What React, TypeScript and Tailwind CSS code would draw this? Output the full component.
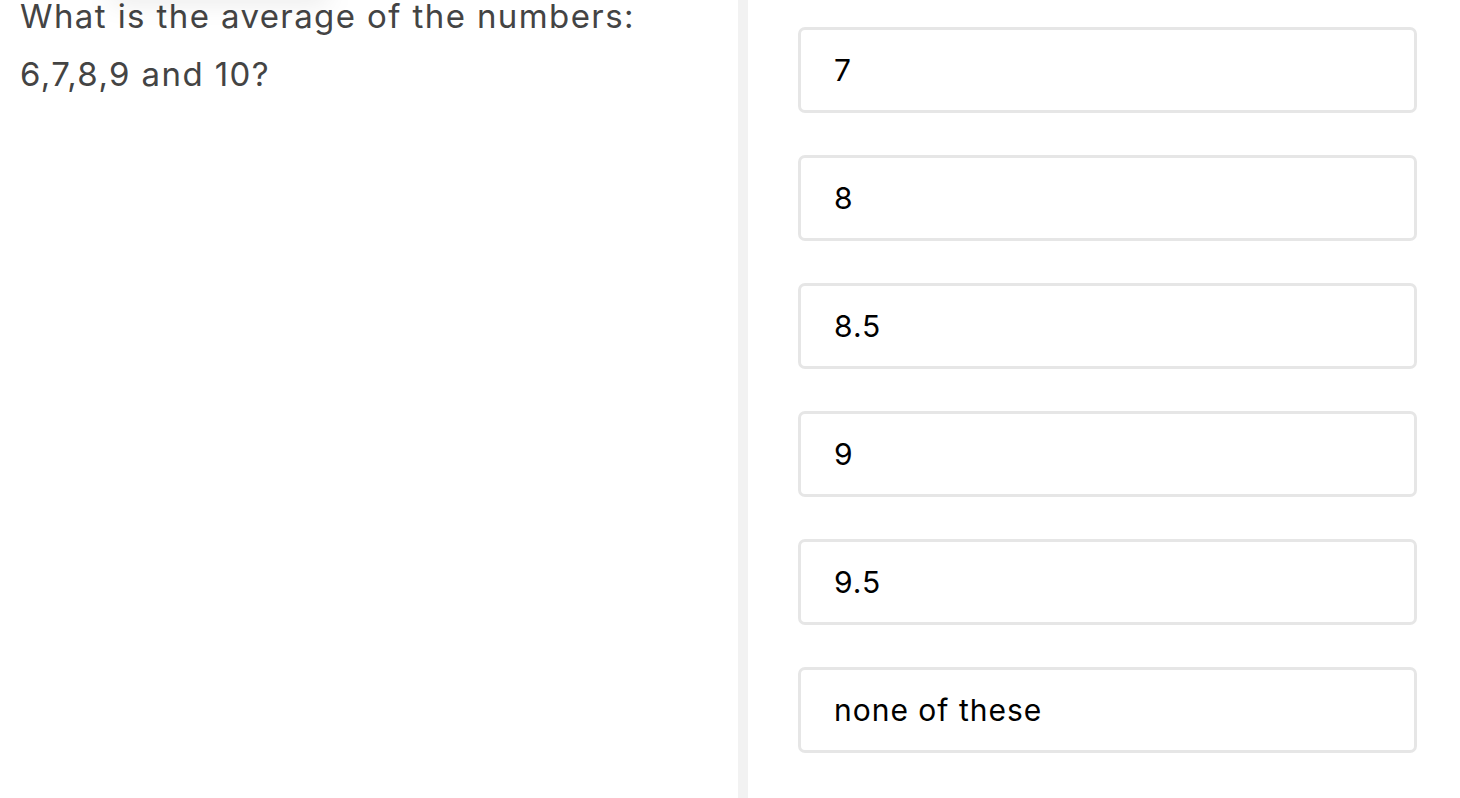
const answers = ['7', '8', '8.5', '9', '9.5', 'none of these'];

export default function App() {
  return (
    <div
      className="relative flex h-[798px] w-full overflow-hidden bg-white"
      style={{ fontFamily: 'Inter, "Noto Sans", sans-serif' }}
    >
      {/* faint shadow from something above the viewport */}
      <div className="pointer-events-none absolute left-[110px] top-[-14px] h-[16px] w-[220px] rounded-full bg-black/10 blur-md" />

      <div className="w-[738px] shrink-0 pl-[20px] pr-6">
        <p className="-mt-[13px] text-[33px] leading-[58px] tracking-[1.4px] text-[#444444]">
          What is the average of the numbers:
          <br />
          6,7,8,9 and 10?
        </p>
      </div>

      <div className="w-[10px] shrink-0 bg-[#f2f2f2]" />

      <div className="flex flex-1 flex-col gap-[42px] pl-[50px] pr-[43px] pt-[27px]">
        {answers.map((a) => (
          <button
            key={a}
            className="flex h-[86px] w-full items-center rounded-[7px] border-[3px] border-[#e6e6e6] bg-white pl-[33px] text-left text-[30px] tracking-[1px] text-black"
          >
            {a}
          </button>
        ))}
      </div>
    </div>
  );
}
